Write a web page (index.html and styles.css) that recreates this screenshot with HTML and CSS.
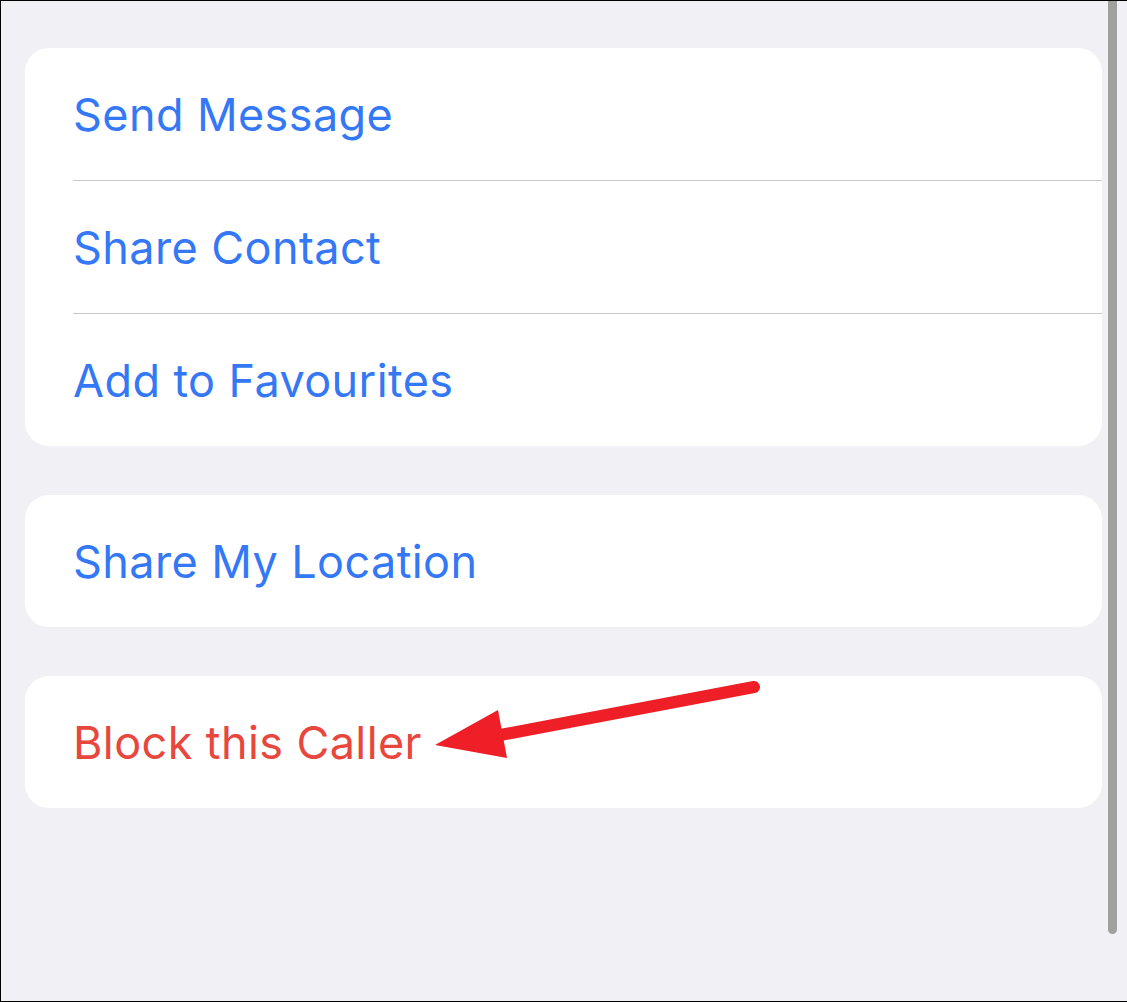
FILE: index.html
```html
<!DOCTYPE html>
<html lang="en">
<head>
    <meta charset="UTF-8">
    <meta name="viewport" content="width=device-width, initial-scale=1.0">
    <title>Contact Options</title>
    <link rel="stylesheet" href="styles.css">
</head>
<body>

    <div class="screen">
        <div class="group">
            <div class="row">Send Message</div>
            <div class="row">Share Contact</div>
            <div class="row">Add to Favourites</div>
        </div>

        <div class="group">
            <div class="row">Share My Location</div>
        </div>

        <div class="group">
            <div class="row danger">Block this Caller</div>
        </div>

        <!-- scroll indicator -->
        <div class="scrollbar"></div>

        <!-- annotation arrow -->
        <svg class="arrow" width="1127" height="1002" viewBox="0 0 1127 1002">
            <line x1="754" y1="687" x2="490" y2="737" stroke="#ee1f26" stroke-width="12" stroke-linecap="round"/>
            <polygon points="435,745 498,710 507,758" fill="#ee1f26"/>
        </svg>
    </div>

</body>
</html>
```

FILE: styles.css
```css
body {
    margin: 0;
    background: #f1f0f5;
    font-family: 'Inter', 'Liberation Sans', sans-serif;
}

.screen {
    position: relative;
    height: 1002px;
    box-sizing: border-box;
    border-left: 1px solid #000;
    border-top: 1px solid #000;
    border-bottom: 1px solid #000;
    padding: 47px 25px 0 24px;
    display: flex;
    flex-direction: column;
    gap: 49px;
    overflow: hidden;
}

.group {
    background: #ffffff;
    border-radius: 24px;
    overflow: hidden;
}

.row {
    height: 132px;
    display: flex;
    align-items: center;
    padding-left: 48px;
    font-size: 45px;
    color: #3478f6;
    letter-spacing: 0.4px;
}

.row + .row {
    border-top: 1px solid #c8c7cc;
    margin-left: 48px;
    padding-left: 0;
}

.danger {
    color: #e8473d;
}

.scrollbar {
    position: absolute;
    top: -1px;
    right: 10px;
    width: 9px;
    height: 934px;
    background: #a0a0a0;
    border-radius: 0 0 5px 5px;
}

.arrow {
    position: absolute;
    left: -1px;
    top: -1px;
    pointer-events: none;
}
```
